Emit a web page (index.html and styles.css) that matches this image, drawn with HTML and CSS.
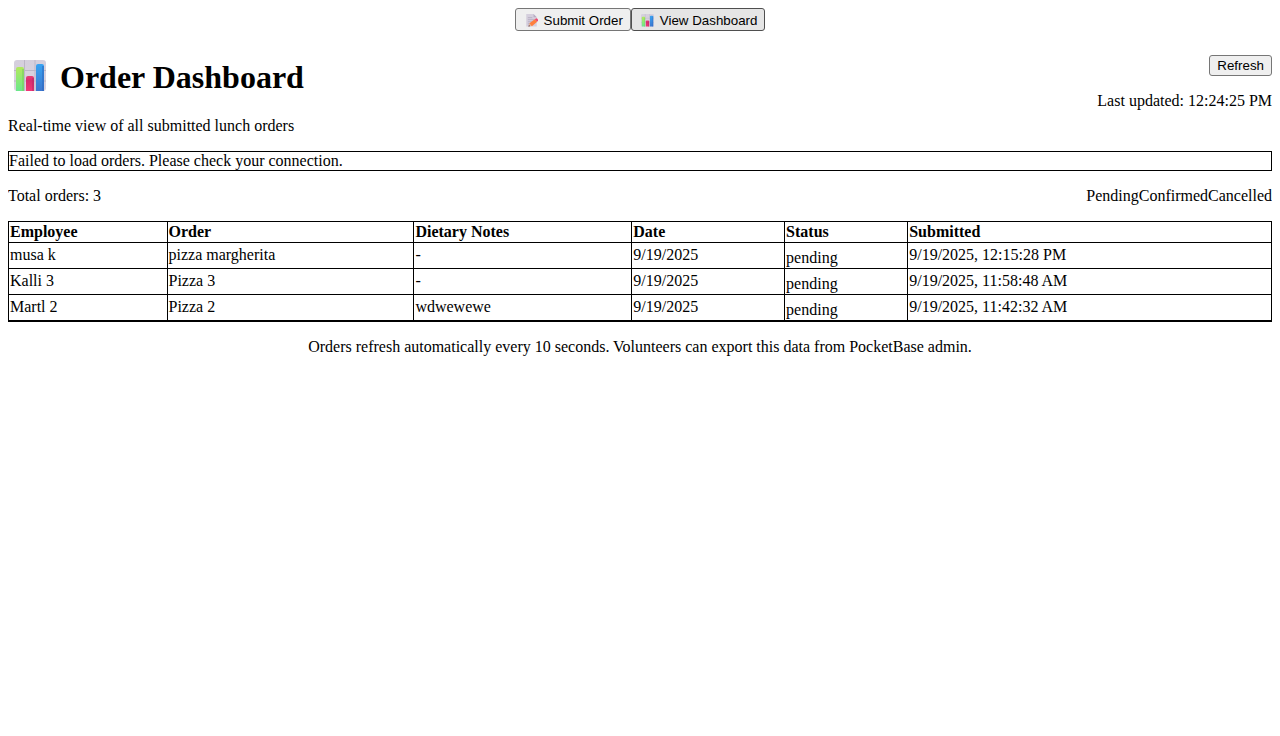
FILE: index.html
```html
<!DOCTYPE html>
<html lang="en">
<head>
<meta charset="utf-8">
<title>Order Dashboard</title>
<link rel="stylesheet" href="styles.css">
</head>
<body>
<svg class="defs" aria-hidden="true">
  <defs>
    <linearGradient id="board" x1="0" y1="0" x2="0" y2="1"><stop offset="0" stop-color="#d5cfdd"/><stop offset="1" stop-color="#dad4e0"/></linearGradient>
    <linearGradient id="green" x1="0" y1="0" x2="0" y2="1"><stop offset="0" stop-color="#b2e95c"/><stop offset="1" stop-color="#6ae78c"/></linearGradient>
    <linearGradient id="pink" x1="0" y1="0" x2="0" y2="1"><stop offset="0" stop-color="#e93f74"/><stop offset="0.3" stop-color="#d82c70"/><stop offset="1" stop-color="#f23675"/></linearGradient>
    <linearGradient id="blue" x1="0" y1="0" x2="0" y2="1"><stop offset="0" stop-color="#38a3f2"/><stop offset="1" stop-color="#3c77cf"/></linearGradient>
    <symbol id="chart" viewBox="0 0 32 32">
      <rect width="32" height="31" rx="3" fill="url(#board)"/>
      <path d="M10.500 0v31M21 0v31M0 10.500h32M0 21h32" stroke="#bdb6c7" fill="none"/>
      <path d="M2 31V9q0-2 2-2h4q2 0 2 2v22z" fill="url(#green)"/>
      <path d="M12 31V18q0-2 2-2h4q2 0 2 2v13z" fill="url(#pink)"/>
      <path d="M22 31V6q0-2 2-2h4q2 0 2 2v25z" fill="url(#blue)"/>
      <path d="M9 9v22" stroke="#74c95d"/><path d="M19 18v13" stroke="#b92866"/><path d="M29 6v25" stroke="#2d65bb"/>
    </symbol>
    <symbol id="memo" viewBox="0 0 32 32">
      <path d="M3 0h18l8 8v23H3z" fill="#d5cfdd"/>
      <path d="M21 0v8h8z" fill="#b7adc3"/>
      <path d="M7 9h11M7 14h16M7 19h10M7 24h7" stroke="#b3a9bf" stroke-width="2"/>
      <path d="M8 31l3-9 7 7z" fill="#e4b898"/>
      <path d="M11 23L24 13l6 6-13 11z" fill="#ff7f3c"/>
      <path d="M24 13l3-2q2-1 4 1t1 4l-2 3z" fill="#ee4771"/>
      <path d="M8 31l2-4 3 3z" fill="#65485a"/>
    </symbol>
  </defs>
</svg>
<nav class="tabs">
  <button class="tab" type="button"><svg class="tab-icon" aria-hidden="true"><use href="#memo"/></svg>Submit Order</button>
  <button class="tab tab-active" type="button"><svg class="tab-icon" aria-hidden="true"><use href="#chart"/></svg>View Dashboard</button>
</nav>
<main class="dashboard">
  <header class="header">
    <div class="heading">
      <h1 class="title"><svg class="title-icon" aria-hidden="true"><use href="#chart"/></svg>Order Dashboard</h1>
      <p class="text">Real-time view of all submitted lunch orders</p>
    </div>
    <div class="actions">
      <button class="refresh" type="button">Refresh</button>
      <p class="text">Last updated: 12:24:25 PM</p>
    </div>
  </header>
  <div class="error" role="alert">Failed to load orders. Please check your connection.</div>
  <div class="summary">
    <div>Total orders: 3</div>
    <div class="legend"><span>Pending</span><span>Confirmed</span><span>Cancelled</span></div>
  </div>
  <table class="orders">
    <thead>
      <tr><th class="employee">Employee</th><th class="order">Order</th><th class="notes">Dietary Notes</th><th class="date">Date</th><th class="state">Status</th><th>Submitted</th></tr>
    </thead>
    <tbody>
      <tr><td>musa k</td><td>pizza margherita</td><td>-</td><td>9/19/2025</td><td><span class="status">pending</span></td><td>9/19/2025, 12:15:28 PM</td></tr>
      <tr><td>Kalli 3</td><td>Pizza 3</td><td>-</td><td>9/19/2025</td><td><span class="status">pending</span></td><td>9/19/2025, 11:58:48 AM</td></tr>
      <tr><td>Martl 2</td><td>Pizza 2</td><td>wdwewewe</td><td>9/19/2025</td><td><span class="status">pending</span></td><td>9/19/2025, 11:42:32 AM</td></tr>
    </tbody>
  </table>
  <p class="text footnote">Orders refresh automatically every 10 seconds. Volunteers can export this data from PocketBase admin.</p>
</main>
</body>
</html>
```
FILE: styles.css
```css
body {
  margin: 8px;
  background: #fff;
  color: #000;
  font: 16px/18px "Liberation Serif", "Times New Roman", serif;
}

.defs {
  position: absolute;
  width: 0;
  height: 0;
}

.tabs {
  display: flex;
  justify-content: center;
  margin-bottom: 24px;
}

.tab,
.refresh {
  box-sizing: border-box;
  margin: 0;
  padding: 0 7px;
  border: 1px solid #767676;
  border-radius: 3px;
  background: #efefef;
  color: #000;
  font-family: "Liberation Sans", Arial, sans-serif;
}

.tab {
  display: flex;
  align-items: center;
  height: 23px;
  padding-top: 2px;
}

.tab-active {
  border-color: #4f4f4f;
  background: #e5e5e5;
}

.tab-icon {
  width: 13px;
  height: 13px;
  margin: 0 6px 0 2px;
}

.refresh {
  height: 21px;
}

.dashboard {
  display: flex;
  flex-direction: column;
  gap: 16px;
}

.header,
.summary {
  display: flex;
  justify-content: space-between;
}

.heading {
  display: flex;
  flex-direction: column;
  gap: 22px;
  padding-top: 5px;
}

.title {
  display: flex;
  align-items: flex-start;
  margin: 0;
  font-size: 32px;
  line-height: 35px;
}

.title-icon {
  width: 32px;
  height: 32px;
  margin: 0 14px 0 6px;
}

.text {
  margin: 0;
}

.actions {
  display: flex;
  flex-direction: column;
  align-items: flex-end;
  gap: 16px;
}

.error {
  border: 1px solid #000;
}

.legend {
  display: flex;
}

.orders {
  width: 100%;
  border-collapse: collapse;
  table-layout: fixed;
}

.orders th,
.orders td {
  box-sizing: border-box;
  padding: 1px;
  border: 1px solid #000;
  text-align: left;
  vertical-align: top;
}

.orders td {
  padding-top: 3px;
}

.orders tbody tr:last-child td {
  border-bottom-width: 2px;
}

.employee { width: 12.55%; }
.order { width: 19.55%; }
.notes { width: 17.25%; }
.date { width: 12.1%; }
.state { width: 9.75%; }

.status {
  display: block;
  padding-top: 3px;
}

.footnote {
  text-align: center;
}
```
